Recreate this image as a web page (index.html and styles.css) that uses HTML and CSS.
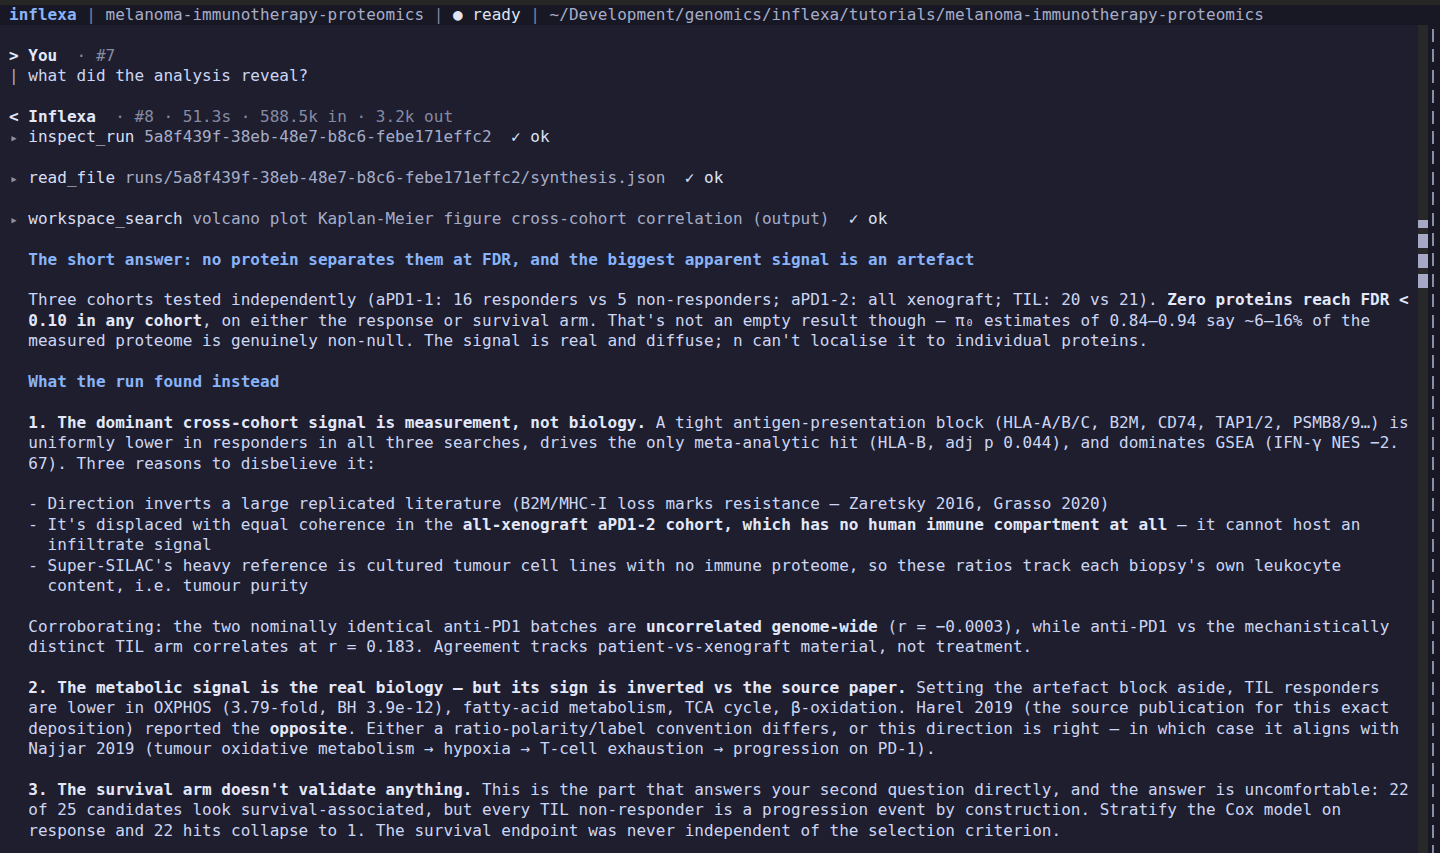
FILE: index.html
```html
<!DOCTYPE html>
<html lang="en">
<head>
<meta charset="utf-8">
<title>inflexa</title>
<link rel="stylesheet" href="styles.css">
</head>
<body>
<div class="app">
  <div class="bar ln"><span class="brand">inflexa</span><span class="sep"> | </span><span class="proj">melanoma-immunotherapy-proteomics</span><span class="sep"> | </span><span class="ready">● ready</span><span class="sep"> | </span><span class="proj">~/Development/genomics/inflexa/tutorials/melanoma-immunotherapy-proteomics</span></div>
  <div class="body">
    <div class="screen">
      <div class="ln"></div>
      <div class="ln"><span class="b">&gt; You</span><span class="d">  · #7</span></div>
      <div class="ln"><span class="m">|</span> what did the analysis reveal?</div>
      <div class="ln"></div>
      <div class="ln"><span class="b">&lt; Inflexa</span><span class="d">  · #8 · 51.3s · 588.5k in · 3.2k out</span></div>
      <div class="ln"><span class="tri">▸</span> <span class="tool">inspect_run</span> <span class="m">5a8f439f-38eb-48e7-b8c6-febe171effc2</span>  <span class="ok">✓ ok</span></div>
      <div class="ln"></div>
      <div class="ln"><span class="tri">▸</span> <span class="tool">read_file</span> <span class="m">runs/5a8f439f-38eb-48e7-b8c6-febe171effc2/synthesis.json</span>  <span class="ok">✓ ok</span></div>
      <div class="ln"></div>
      <div class="ln"><span class="tri">▸</span> <span class="tool">workspace_search</span> <span class="m">volcano plot Kaplan-Meier figure cross-cohort correlation (output)</span>  <span class="ok">✓ ok</span></div>
      <div class="ln"></div>
      <div class="ln">  <span class="h">The short answer: no protein separates them at FDR, and the biggest apparent signal is an artefact</span></div>
      <div class="ln"></div>
      <div class="ln">  Three cohorts tested independently (aPD1-1: 16 responders vs 5 non-responders; aPD1-2: all xenograft; TIL: 20 vs 21). <span class="b">Zero proteins reach FDR &lt;</span></div>
      <div class="ln">  <span class="b">0.10 in any cohort</span>, on either the response or survival arm. That's not an empty result though – π₀ estimates of 0.84–0.94 say ~6–16% of the</div>
      <div class="ln">  measured proteome is genuinely non-null. The signal is real and diffuse; n can't localise it to individual proteins.</div>
      <div class="ln"></div>
      <div class="ln">  <span class="h">What the run found instead</span></div>
      <div class="ln"></div>
      <div class="ln">  <span class="b">1. The dominant cross-cohort signal is measurement, not biology.</span> A tight antigen-presentation block (HLA-A/B/C, B2M, CD74, TAP1/2, PSMB8/9…) is</div>
      <div class="ln">  uniformly lower in responders in all three searches, drives the only meta-analytic hit (HLA-B, adj p 0.044), and dominates GSEA (IFN-γ NES −2.</div>
      <div class="ln">  67). Three reasons to disbelieve it:</div>
      <div class="ln"></div>
      <div class="ln">  - Direction inverts a large replicated literature (B2M/MHC-I loss marks resistance – Zaretsky 2016, Grasso 2020)</div>
      <div class="ln">  - It's displaced with equal coherence in the <span class="b">all-xenograft aPD1-2 cohort, which has no human immune compartment at all</span> – it cannot host an</div>
      <div class="ln">    infiltrate signal</div>
      <div class="ln">  - Super-SILAC's heavy reference is cultured tumour cell lines with no immune proteome, so these ratios track each biopsy's own leukocyte</div>
      <div class="ln">    content, i.e. tumour purity</div>
      <div class="ln"></div>
      <div class="ln">  Corroborating: the two nominally identical anti-PD1 batches are <span class="b">uncorrelated genome-wide</span> (r = −0.0003), while anti-PD1 vs the mechanistically</div>
      <div class="ln">  distinct TIL arm correlates at r = 0.183. Agreement tracks patient-vs-xenograft material, not treatment.</div>
      <div class="ln"></div>
      <div class="ln">  <span class="b">2. The metabolic signal is the real biology – but its sign is inverted vs the source paper.</span> Setting the artefact block aside, TIL responders</div>
      <div class="ln">  are lower in OXPHOS (3.79-fold, BH 3.9e-12), fatty-acid metabolism, TCA cycle, β-oxidation. Harel 2019 (the source publication for this exact</div>
      <div class="ln">  deposition) reported the <span class="b">opposite</span>. Either a ratio-polarity/label convention differs, or this direction is right – in which case it aligns with</div>
      <div class="ln">  Najjar 2019 (tumour oxidative metabolism → hypoxia → T-cell exhaustion → progression on PD-1).</div>
      <div class="ln"></div>
      <div class="ln">  <span class="b">3. The survival arm doesn't validate anything.</span> This is the part that answers your second question directly, and the answer is uncomfortable: 22</div>
      <div class="ln">  of 25 candidates look survival-associated, but every TIL non-responder is a progression event by construction. Stratify the Cox model on</div>
      <div class="ln">  response and 22 hits collapse to 1. The survival endpoint was never independent of the selection criterion.</div>
    </div>
    <div class="track">
      <div class="mark mark-first"></div>
      <div class="mark"></div>
      <div class="mark"></div>
      <div class="mark"></div>
    </div>
    <div class="rail"></div>
  </div>
</div>
</body>
</html>
```

FILE: styles.css
```css
html, body {
  margin: 0;
  padding: 0;
  height: 100%;
  background: #1e1e2e;
  overflow: hidden;
}

.app {
  height: 853px;
  padding-top: 5px;
  box-sizing: border-box;
  background: #262626;
  display: flex;
  flex-direction: column;
  font-family: "DejaVu Sans Mono", "Liberation Mono", monospace;
  font-size: 16px;
  letter-spacing: 0.02px;
  color: #cdd6f4;
}

.ln {
  height: 20.4px;
  line-height: 20.4px;
  white-space: pre;
}

.bar {
  background: #181825;
  padding-left: 9px;
  color: #a6adc8;
}

.brand {
  color: #89b4fa;
  font-weight: bold;
}

.sep {
  color: #7f849c;
}

.proj {
  color: #a6adc8;
}

.ready {
  color: #dfe4f5;
}

.body {
  flex: 1;
  display: flex;
  min-height: 0;
}

.screen {
  flex: 1;
  background: #1e1e2e;
  padding-left: 9px;
  overflow: hidden;
}

.b {
  color: #e3e8fa;
  font-weight: bold;
}

.h {
  color: #89b4fa;
  font-weight: bold;
}

.d {
  color: #868ba4;
}

.m {
  color: #a6adc8;
}

.tri {
  color: #8a8fa8;
  font-size: 13px;
  display: inline-block;
  width: 9.65px;
  text-align: center;
}

.tool {
  color: #d8def4;
}

.ok {
  color: #dfe4f5;
}

.track {
  width: 10px;
  background: #28282a;
  display: flex;
  flex-direction: column;
  align-items: stretch;
}

.mark {
  height: 14px;
  margin-top: 6px;
  background: #a6a9c6;
}

.mark-first {
  height: 8px;
  margin-top: 195px;
}

.rail {
  width: 12px;
  background-color: #181825;
  background-image: repeating-linear-gradient(to bottom,
    transparent 0px, transparent 4px,
    #8a8fa8 4px, #8a8fa8 17px,
    transparent 17px, transparent 20.4px);
  background-size: 2px 100%;
  background-position: 4px 0;
  background-repeat: no-repeat;
}
```
